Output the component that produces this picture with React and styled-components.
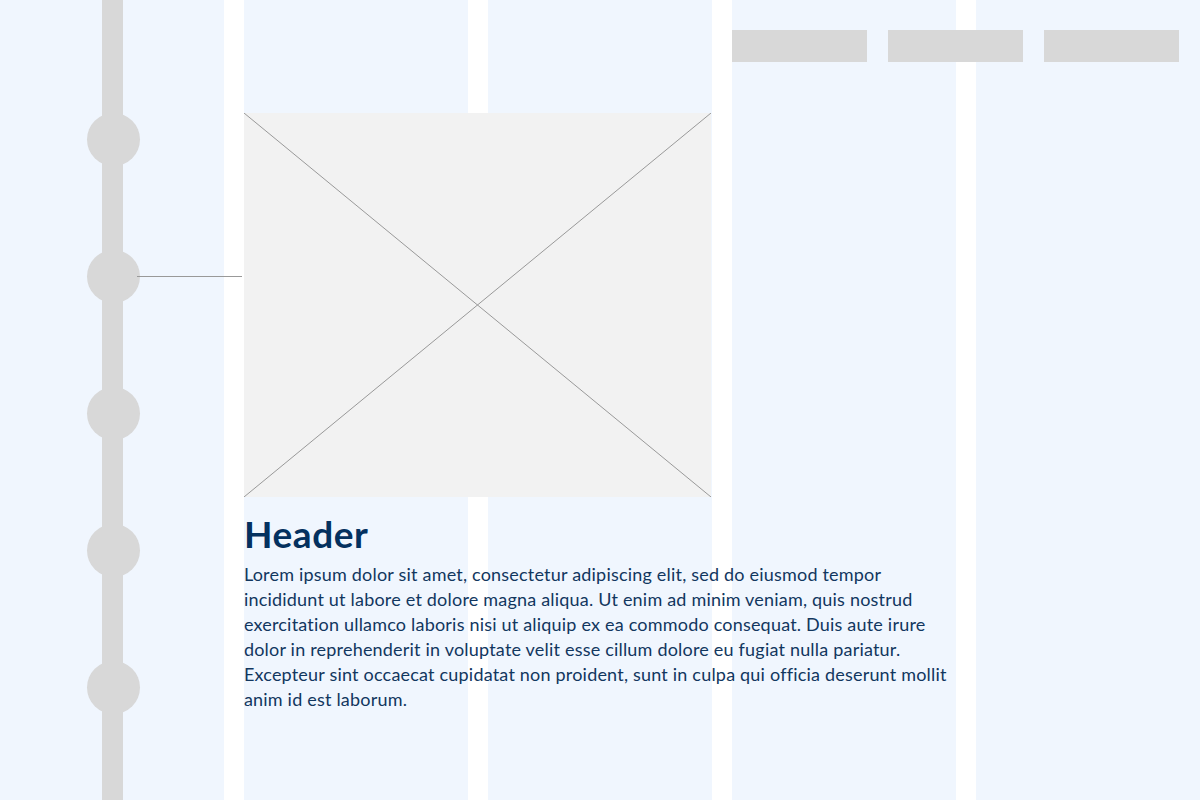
import React from "react";
import styled, { createGlobalStyle } from "styled-components";

const GlobalStyle = createGlobalStyle`
  html, body { margin: 0; padding: 0; background: #ffffff; }
  body { font-family: "Lato", "Noto Sans", sans-serif; overflow: hidden; }
  * { box-sizing: border-box; }
`;

const COLS = "repeat(5, 1fr)";
const GAP = "19.5px";

const Page = styled.div`
  position: relative;
  width: 1200px;
  height: 800px;
  overflow: hidden;
  background: #ffffff;
`;

const ColumnGuides = styled.div`
  position: absolute;
  inset: 0;
  display: grid;
  grid-template-columns: ${COLS};
  column-gap: ${GAP};
  z-index: 0;
`;

const Guide = styled.div`
  background: #f0f6fe;
`;

const Layout = styled.div`
  position: relative;
  z-index: 1;
  height: 100%;
  display: grid;
  grid-template-columns: ${COLS};
  grid-template-rows: 113px 1fr;
  column-gap: ${GAP};
`;

const Timeline = styled.div`
  grid-column: 1;
  grid-row: 1 / 3;
  padding-left: 87px;
`;

const Track = styled.div`
  width: 53px;
  height: 100%;
  padding-top: 113px;
  display: flex;
  flex-direction: column;
  gap: 84px;
  background: linear-gradient(
    to right,
    transparent 15px,
    #d8d8d8 15px,
    #d8d8d8 36px,
    transparent 36px
  );
`;

const Node = styled.div`
  position: relative;
  width: 53px;
  height: 53px;
  flex: none;
  border-radius: 50%;
  background: #d8d8d8;

  ${({ $linked }) =>
    $linked &&
    `
    &::after {
      content: "";
      position: absolute;
      left: 50px;
      top: 26px;
      width: 105px;
      height: 1px;
      background: #999999;
    }
  `}
`;

const Nav = styled.nav`
  grid-column: 4 / 6;
  grid-row: 1;
  padding-top: 30px;
  display: flex;
  gap: 21px;
  align-items: flex-start;
`;

const NavItem = styled.div`
  width: 135px;
  height: 32px;
  background: #d8d8d8;
`;

const Content = styled.main`
  grid-column: 2 / 5;
  grid-row: 2;
  display: flex;
  flex-direction: column;
`;

const ImagePlaceholder = styled.div`
  width: 467px;
  height: 384px;
  background: #f2f2f2;

  svg {
    display: block;
    width: 100%;
    height: 100%;
  }
`;

const Header = styled.h1`
  margin: 15px 0 0;
  font-family: "Lato", "Noto Sans", sans-serif;
  font-weight: 700;
  font-size: 37px;
  letter-spacing: 0.6px;
  line-height: 44px;
  color: #04315f;
`;

const Body = styled.p`
  margin: 6px 0 0;
  font-family: "Lato", "Noto Sans", sans-serif;
  font-size: 18px;
  letter-spacing: 0.2px;
  line-height: 25px;
  color: #12375f;
`;

export default function App() {
  return (
    <>
      <GlobalStyle />
      <Page>
        <ColumnGuides>
          {[0, 1, 2, 3, 4].map((i) => (
            <Guide key={i} />
          ))}
        </ColumnGuides>
        <Layout>
          <Timeline>
            <Track>
              <Node />
              <Node $linked />
              <Node />
              <Node />
              <Node />
            </Track>
          </Timeline>
          <Nav>
            <NavItem />
            <NavItem />
            <NavItem />
          </Nav>
          <Content>
            <ImagePlaceholder>
              <svg viewBox="0 0 467 384" preserveAspectRatio="none">
                <line x1="0" y1="0" x2="467" y2="384" stroke="#999" strokeWidth="1" />
                <line x1="467" y1="0" x2="0" y2="384" stroke="#999" strokeWidth="1" />
              </svg>
            </ImagePlaceholder>
            <Header>Header</Header>
            <Body>
              Lorem ipsum dolor sit amet, consectetur adipiscing elit, sed do eiusmod tempor
              incididunt ut labore et dolore magna aliqua. Ut enim ad minim veniam, quis nostrud
              exercitation ullamco laboris nisi ut aliquip ex ea commodo consequat. Duis aute irure
              dolor in reprehenderit in voluptate velit esse cillum dolore eu fugiat nulla pariatur.
              Excepteur sint occaecat cupidatat non proident, sunt in culpa qui officia deserunt mollit
              anim id est laborum.
            </Body>
          </Content>
        </Layout>
      </Page>
    </>
  );
}
